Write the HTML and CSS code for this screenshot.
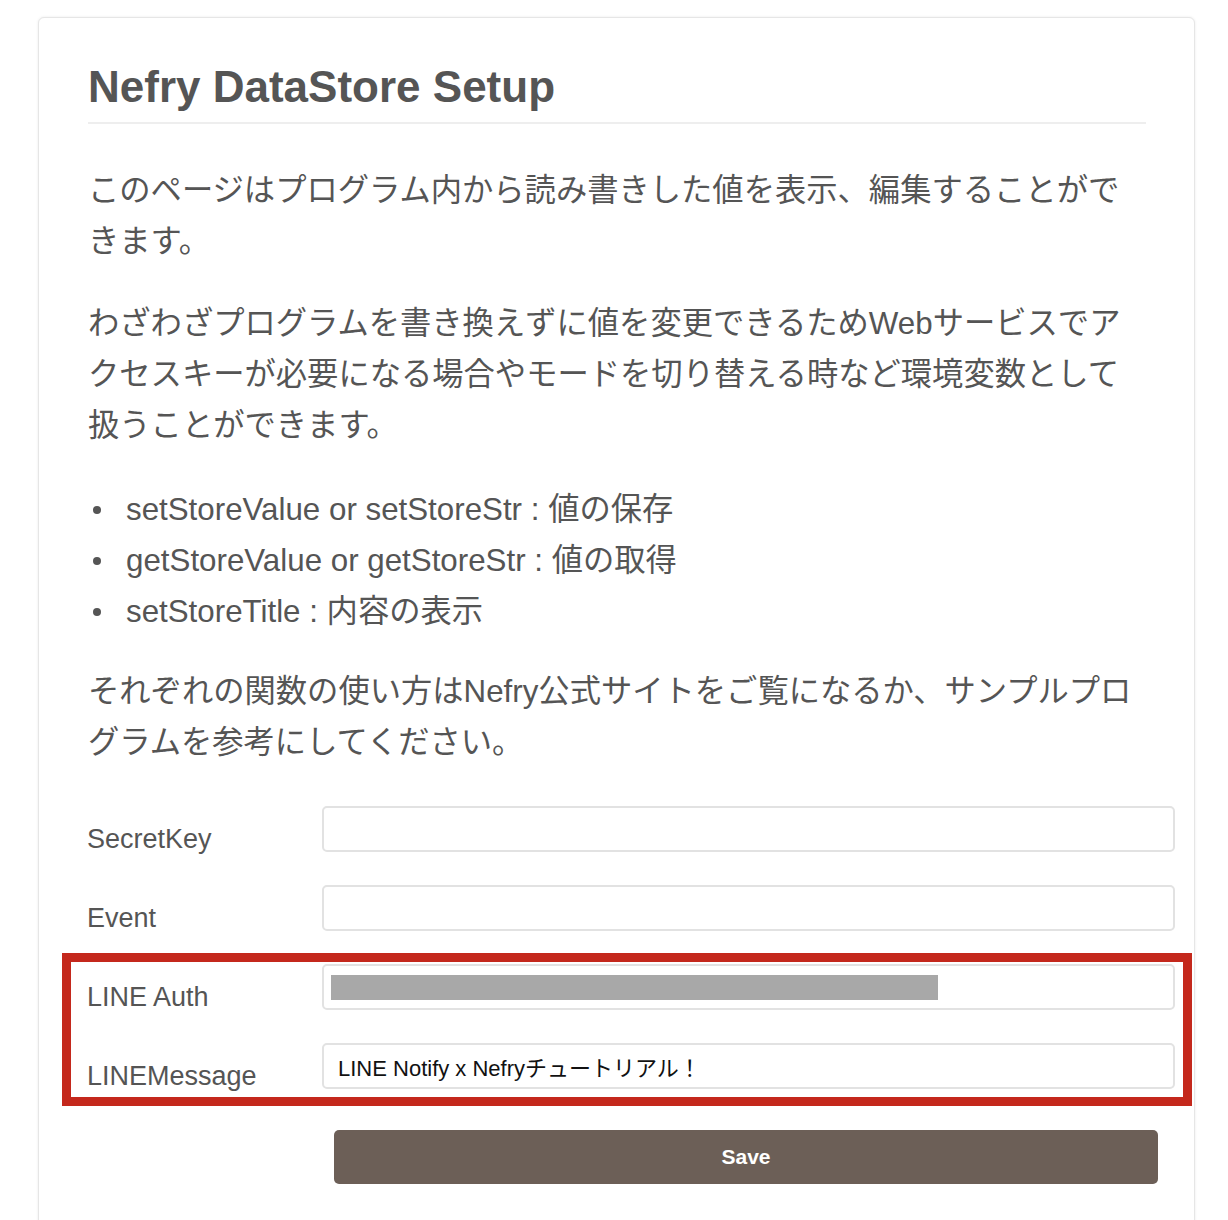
FILE: index.html
```html
<!DOCTYPE html>
<html lang="ja">
<head>
<meta charset="utf-8">
<title>Nefry DataStore Setup</title>
<link rel="stylesheet" href="styles.css">
</head>
<body>
<div class="card">
  <h1 class="title">Nefry DataStore Setup</h1>
  <p class="text">このページはプログラム内から読み書きした値を表示、編集することができます。</p>
  <p class="text">わざわざプログラムを書き換えずに値を変更できるためWebサービスでアクセスキーが必要になる場合やモードを切り替える時など環境変数として扱うことができます。</p>
  <ul class="funcs">
    <li class="func">setStoreValue or setStoreStr : 値の保存</li>
    <li class="func">getStoreValue or getStoreStr : 値の取得</li>
    <li class="func">setStoreTitle : 内容の表示</li>
  </ul>
  <p class="text">それぞれの関数の使い方はNefry公式サイトをご覧になるか、サンプルプログラムを参考にしてください。</p>
  <form class="form">
    <div class="row">
      <label class="label" for="f1">SecretKey</label>
      <input class="field" id="f1" type="text" value="">
    </div>
    <div class="row">
      <label class="label" for="f2">Event</label>
      <input class="field" id="f2" type="text" value="">
    </div>
    <div class="highlight">
      <div class="row">
        <label class="label" for="f3">LINE Auth</label>
        <div class="field-wrap">
          <input class="field" id="f3" type="text" value="">
          <span class="redact"></span>
        </div>
      </div>
      <div class="row last">
        <label class="label" for="f4">LINEMessage</label>
        <input class="field" id="f4" type="text" value="LINE Notify x Nefryチュートリアル！">
      </div>
    </div>
    <div class="actions">
      <button class="save" type="button">Save</button>
    </div>
  </form>
</div>
</body>
</html>
```

FILE: styles.css
```css
html, body {
  margin: 0;
  padding: 0;
  background: #ffffff;
}

body {
  font-family: "Liberation Sans", "Noto Sans CJK JP", sans-serif;
  color: #555555;
}

.card {
  box-sizing: border-box;
  width: 1157px;
  margin: 17px 0 0 38px;
  padding: 44px 48px 60px 49px;
  border: 1px solid #e6e6e6;
  border-radius: 6px;
  box-shadow: 0 0 3px rgba(0, 0, 0, 0.08);
  background: #ffffff;
}

.title {
  margin: 0 0 41px;
  padding: 0 0 10px;
  font-size: 44px;
  line-height: 50px;
  font-weight: bold;
  color: #555555;
  border-bottom: 2px solid #eeeeee;
}

.text {
  margin: 0 0 31px;
  font-size: 31.3px;
  line-height: 51px;
}

.funcs {
  margin: 0 0 29px;
  padding: 2px 0 0;
  list-style: none;
}

.func {
  display: flex;
  align-items: center;
  font-size: 31.3px;
  line-height: 51px;
}

.func::before {
  content: "";
  flex: none;
  width: 8px;
  height: 8px;
  margin: 0 25px 0 5px;
  border-radius: 50%;
  background: #555555;
}

.form {
  margin: 0 -29px 0 -1px;
  padding-top: 7px;
}

.row {
  display: grid;
  grid-template-columns: 235px 1fr;
  margin-bottom: 33px;
}

.row.last {
  margin-bottom: 0;
}

.label {
  padding-top: 20px;
  font-size: 27px;
  line-height: 26px;
  color: #555555;
}

.field-wrap {
  position: relative;
}

.field {
  box-sizing: border-box;
  width: 100%;
  height: 46px;
  margin: 0;
  padding: 0 12px 0 14px;
  border: 2px solid #e2e2e2;
  border-radius: 5px;
  background: #ffffff;
  font-family: "Liberation Sans", "Noto Sans CJK JP", sans-serif;
  font-size: 22px;
  color: #111111;
  outline: none;
}

.redact {
  position: absolute;
  left: 9px;
  top: 11px;
  width: 607px;
  height: 25px;
  background: #a8a8a8;
}

.highlight {
  position: relative;
}

.highlight::after {
  content: "";
  position: absolute;
  top: -11px;
  right: -17px;
  bottom: -17px;
  left: -25px;
  border: 9px solid #c4281c;
  pointer-events: none;
}

.actions {
  display: grid;
  grid-template-columns: 235px 1fr;
  margin-top: 41px;
}

.save {
  grid-column: 2;
  height: 54px;
  margin: 0 17px 0 12px;
  border: none;
  border-radius: 5px;
  background: #6c5f57;
  color: #ffffff;
  font-family: "Liberation Sans", sans-serif;
  font-size: 21px;
  font-weight: bold;
}
```
